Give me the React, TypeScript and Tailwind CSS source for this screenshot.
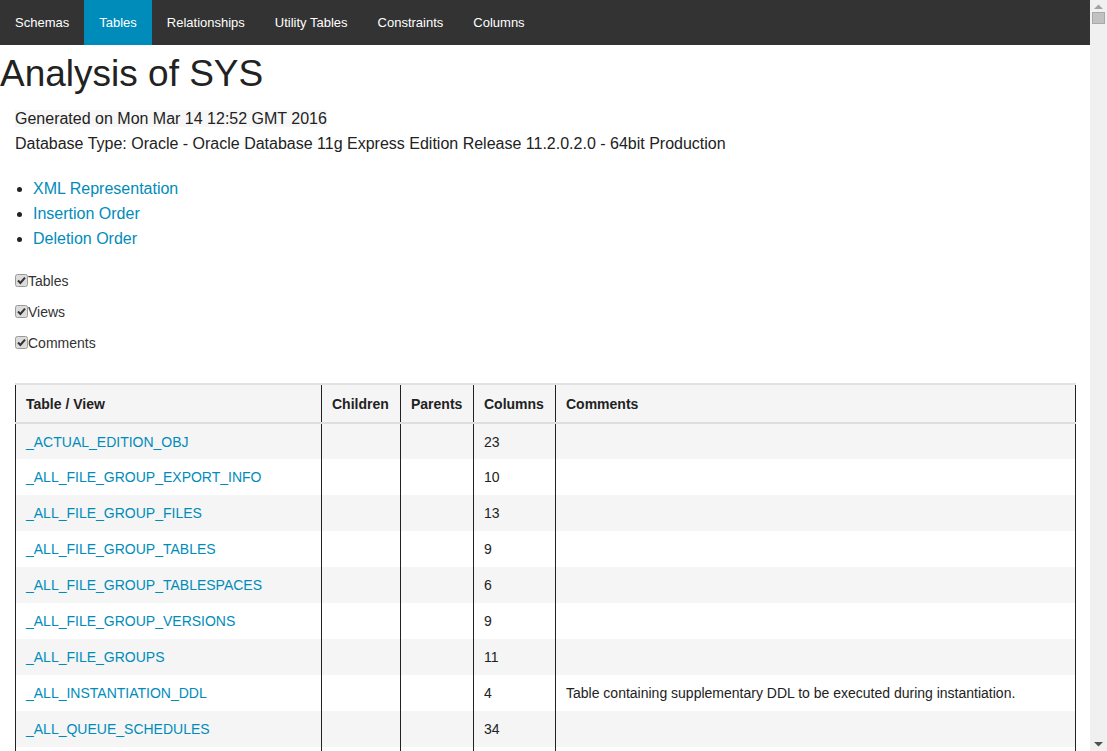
import React from "react";

const navItems = ["Schemas", "Tables", "Relationships", "Utility Tables", "Constraints", "Columns"];

const rows: { name: string; cols: string; comment?: string }[] = [
  { name: "_ACTUAL_EDITION_OBJ", cols: "23" },
  { name: "_ALL_FILE_GROUP_EXPORT_INFO", cols: "10" },
  { name: "_ALL_FILE_GROUP_FILES", cols: "13" },
  { name: "_ALL_FILE_GROUP_TABLES", cols: "9" },
  { name: "_ALL_FILE_GROUP_TABLESPACES", cols: "6" },
  { name: "_ALL_FILE_GROUP_VERSIONS", cols: "9" },
  { name: "_ALL_FILE_GROUPS", cols: "11" },
  { name: "_ALL_INSTANTIATION_DDL", cols: "4", comment: "Table containing supplementary DDL to be executed during instantiation." },
  { name: "_ALL_QUEUE_SCHEDULES", cols: "34" },
];

function Check() {
  return (
    <svg width="13" height="13" viewBox="0 0 13 13" className="shrink-0 -mt-[3px]">
      <rect x="0.5" y="0.5" width="12" height="12" rx="2" fill="#dcdcdc" stroke="#9a9a9a" />
      <path d="M3 6.5 L5.4 9 L10 3.6" fill="none" stroke="#333" strokeWidth="2" />
    </svg>
  );
}

export default function App() {
  return (
    <div className="h-screen overflow-hidden flex font-['Liberation_Sans',Arial,sans-serif] text-[#222] bg-white">
      <div className="flex-1 min-w-0 overflow-hidden">
        <nav className="h-[45px] bg-[#333] flex">
          {navItems.map((n) => (
            <div
              key={n}
              className={`px-[15px] flex items-center text-[13px] text-white ${n === "Tables" ? "bg-[#008cba]" : ""}`}
            >
              {n}
            </div>
          ))}
        </nav>
        <h1 className="text-[37px] leading-[40px] mt-[9px] font-normal">Analysis of SYS</h1>
        <div className="px-[15px]">
          <div className="mt-[12px] text-[16px] leading-[25px]">
            <div>
              <span className="bg-[#f7f7f7]">Generated on Mon Mar 14 12:52 GMT 2016</span>
            </div>
            <div>Database Type: Oracle - Oracle Database 11g Express Edition Release 11.2.0.2.0 - 64bit Production</div>
          </div>
          <ul className="mt-[20px] list-disc pl-[18px] text-[16px] leading-[25px] text-[#008cba]">
            <li className="marker:text-[#222]">XML Representation</li>
            <li className="marker:text-[#222]">Insertion Order</li>
            <li className="marker:text-[#222]">Deletion Order</li>
          </ul>
          <div className="mt-[15px] text-[14px] text-[#333]">
            {["Tables", "Views", "Comments"].map((c) => (
              <div key={c} className="h-[31px] flex items-center">
                <Check />
                <span>{c}</span>
              </div>
            ))}
          </div>
          <table className="mt-[24px] border-collapse table-fixed w-[1060px] text-[14px]">
            <colgroup>
              <col className="w-[306px]" />
              <col className="w-[79px]" />
              <col className="w-[73px]" />
              <col className="w-[82px]" />
              <col className="w-[520px]" />
            </colgroup>
            <thead>
              <tr className="bg-[#f5f5f5] h-[39px]">
                {["Table / View", "Children", "Parents", "Columns", "Comments"].map((h) => (
                  <th
                    key={h}
                    className="text-left font-bold px-[10px] py-0 border-x border-x-[#222] border-t-2 border-t-[#e2e2e2] border-b-2 border-b-[#dddddd] leading-[18px]"
                  >
                    {h}
                  </th>
                ))}
              </tr>
            </thead>
            <tbody>
              {rows.map((r, i) => (
                <tr key={r.name} className={`h-[36px] ${i % 2 === 0 ? "bg-[#f5f5f5]" : "bg-white"}`}>
                  <td className="px-[10px] py-0 border-x border-[#222] text-[#008cba] leading-[18px]">{r.name}</td>
                  <td className="px-[10px] py-0 border-x border-[#222]"></td>
                  <td className="px-[10px] py-0 border-x border-[#222]"></td>
                  <td className="px-[10px] py-0 border-x border-[#222] leading-[18px]">{r.cols}</td>
                  <td className="px-[10px] py-0 border-x border-[#222] leading-[18px]">{r.comment ?? ""}</td>
                </tr>
              ))}
              <tr className="h-[36px] bg-white">
                <td className="border-x border-[#222]"></td>
                <td className="border-x border-[#222]"></td>
                <td className="border-x border-[#222]"></td>
                <td className="border-x border-[#222]"></td>
                <td className="border-x border-[#222]"></td>
              </tr>
            </tbody>
          </table>
        </div>
      </div>
      <div className="w-[17px] bg-[#f0f0f0] flex flex-col items-center">
        <svg width="9" height="5" viewBox="0 0 9 5" className="mt-[4px]">
          <path d="M0 5 L4.5 0.5 L9 5 Z" fill="#a3a3a3" />
        </svg>
        <div className="mt-[3px] w-[13px] h-[12px] bg-[#c1c1c1] border border-[#a8a8a8]" />
        <div className="flex-1" />
        <svg width="9" height="5" viewBox="0 0 9 5" className="mb-[4px]">
          <path d="M0 0 L4.5 4.5 L9 0 Z" fill="#505050" />
        </svg>
      </div>
    </div>
  );
}
